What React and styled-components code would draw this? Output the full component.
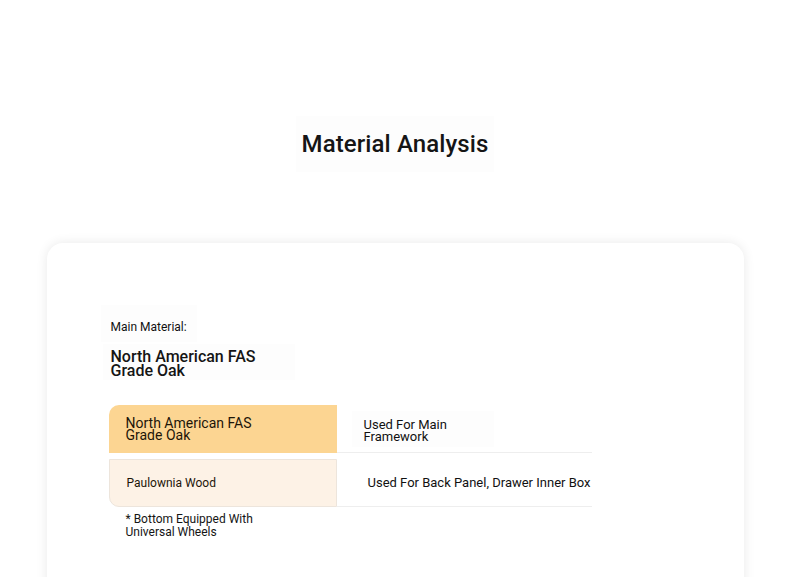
import React from 'react';
import styled, {createGlobalStyle} from 'styled-components';

const Global = createGlobalStyle`
  body {
    margin: 0;
    background: #ffffff;
    font-family: Roboto, "Liberation Sans", sans-serif;
    color: #1b1b1b;
  }
`;

const Page = styled.div`
  width: 790px;
  height: 577px;
  overflow: hidden;
  display: flex;
  flex-direction: column;
  align-items: center;
  padding-top: 116px;
  box-sizing: border-box;
  & > * {
    flex-shrink: 0;
  }
`;

const TitleBox = styled.div`
  height: 56px;
  padding: 0 6px;
  display: flex;
  align-items: center;
  background: #fdfdfd;
`;

const Title = styled.h1`
  margin: 0;
  font-size: 24px;
  font-weight: 500;
  letter-spacing: 0.1px;
  color: #151515;
`;

const Card = styled.div`
  margin-top: 71px;
  width: 697px;
  height: 400px;
  background: #fff;
  border-radius: 16px;
  box-shadow: 0 0 12px rgba(0, 0, 0, 0.09);
  padding: 62px 54px;
  box-sizing: border-box;
  display: flex;
  flex-direction: column;
  align-items: flex-start;
`;

const LabelBox = styled.div`
  padding: 15px 10px 8px;
  background: #fdfdfd;
  font-size: 12px;
  line-height: 14px;
  color: #111;
`;

const ValueBox = styled.div`
  margin: 2px 0 0 2px;
  padding: 6px 34px 2px 8px;
  background: #fdfdfd;
  font-size: 16px;
  line-height: 14px;
  font-weight: 500;
  color: #151515;
  width: 150px;
`;

const Table = styled.div`
  margin: 25px 0 0 8px;
  display: grid;
  grid-template-columns: 228px 255px;
`;

const MatCell = styled.div`
  height: 48px;
  box-sizing: border-box;
  display: flex;
  align-items: center;
  padding-left: 17px;
  margin-top: ${p => (p.$first ? '0' : '6px')};
  background: ${p => (p.$first ? '#fcd592' : '#fdf2e6')};
  border: ${p => (p.$first ? 'none' : '1px solid #ede5dc')};
  border-radius: ${p => (p.$first ? '10px 0 0 0' : '0 0 0 10px')};
  font-size: ${p => (p.$first ? '14px' : '12px')};
  line-height: 12px;
  font-weight: 400;
  color: #1e1609;
`;

const MatText = styled.span`
  width: ${p => (p.$first ? '140px' : 'auto')};
`;

const UseCell = styled.div`
  height: 48px;
  box-sizing: border-box;
  margin-top: ${p => (p.$first ? '0' : '6px')};
  border-bottom: 1px solid #eeeeee;
  display: flex;
  align-items: center;
  padding-left: ${p => (p.$first ? '15px' : '31px')};
  white-space: ${p => (p.$first ? 'normal' : 'nowrap')};
`;

const UseText = styled.span`
  display: block;
  padding: ${p => (p.$first ? '8px 12px 4px' : '5px 0')};
  background: ${p => (p.$first ? '#fdfdfd' : 'transparent')};
  width: ${p => (p.$first ? '118px' : 'auto')};
  font-size: 13px;
  line-height: 12px;
  font-weight: 400;
  color: #111;
`;

const Note = styled.div`
  margin: 4px 0 0 25px;
  padding: 2px 8px 2px 0;
  width: 150px;
  font-size: 12px;
  line-height: 12.5px;
  font-weight: 400;
  color: #151515;
`;

const rows = [
  {mat: 'North American FAS Grade Oak', use: 'Used For Main Framework'},
  {mat: 'Paulownia Wood', use: 'Used For Back Panel, Drawer Inner Box'},
];

export default function App() {
  return (
    <Page>
      <Global/>
      <TitleBox><Title>Material Analysis</Title></TitleBox>
      <Card>
        <LabelBox>Main Material:</LabelBox>
        <ValueBox>North American FAS Grade Oak</ValueBox>
        <Table>
          {rows.map((r, i) => (
            <React.Fragment key={r.mat}>
              <MatCell $first={i === 0}><MatText $first={i === 0}>{r.mat}</MatText></MatCell>
              <UseCell $first={i === 0}><UseText $first={i === 0}>{r.use}</UseText></UseCell>
            </React.Fragment>
          ))}
        </Table>
        <Note>* Bottom Equipped With Universal Wheels</Note>
      </Card>
    </Page>
  );
}
